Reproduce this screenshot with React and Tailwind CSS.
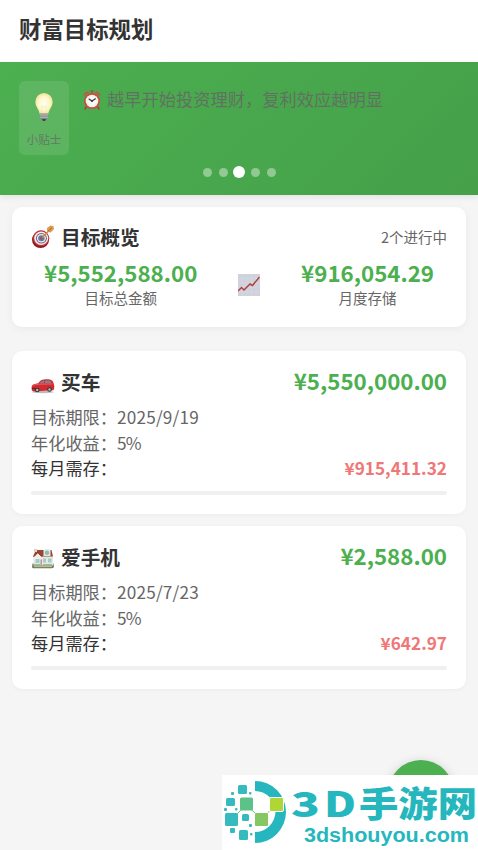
import clsx from 'clsx'

const tips = [0, 1, 2, 3, 4]

const goals = [
  { name: '买车', icon: CarIcon, amount: '¥5,550,000.00', deadline: '2025/9/19', rate: '5%', monthly: '¥915,411.32' },
  { name: '爱手机', icon: HouseIcon, amount: '¥2,588.00', deadline: '2025/7/23', rate: '5%', monthly: '¥642.97' },
]

function BulbIcon({ className }) {
  return (
    <svg viewBox="0 0 20 30" className={className}>
      <defs>
        <radialGradient id="bulb" cx="0.5" cy="0.5" r="0.55">
          <stop offset="0" stopColor="#fffff4" />
          <stop offset="0.6" stopColor="#fdf8c9" />
          <stop offset="1" stopColor="#eed98a" />
        </radialGradient>
      </defs>
      <path d="M10 1a8.7 8.7 0 0 1 8.7 8.7c0 5-3.7 7.2-4.4 12.3H5.7C5 16.9 1.3 14.7 1.3 9.7A8.7 8.7 0 0 1 10 1z" fill="url(#bulb)" />
      <path d="M8.500 21l-1-7 2.500 1 2.500-1-1 7" fill="none" stroke="#f3e6ae" strokeWidth="0.6" />
      <path d="M6 21.5h8V26l-2 2.600H8L6 26z" fill="#7f8a86" />
      <path d="M6 23h8M6 25.200h8" stroke="#cdd3cf" strokeWidth="0.8" />
      <path d="M8 27h4l-1 2H9z" fill="#3d4944" />
    </svg>
  )
}

function ClockIcon({ className }) {
  return (
    <svg viewBox="0 0 20 20" className={className}>
      <path d="M4.500 16.500L3 19M15.500 16.500L17 19" stroke="#a6463a" strokeWidth="1.600" strokeLinecap="round" />
      <path d="M1.500 6.200A4.300 4.300 0 0 1 7.500 2zM18.500 6.200A4.300 4.300 0 0 0 12.500 2z" fill="#c75446" />
      <path d="M10 3V1M8.500 1h3" stroke="#a6463a" strokeWidth="1.200" />
      <circle cx="10" cy="11" r="8" fill="#c94b3e" />
      <circle cx="10" cy="11" r="6.300" fill="#f8f7f3" />
      <circle cx="10" cy="11" r="5.300" fill="none" stroke="#b9bcb8" strokeWidth="0.7" strokeDasharray="0.7 2.070" />
      <path d="M7 9l3 2 3.400-2.200" fill="none" stroke="#303030" strokeWidth="1.100" strokeLinecap="round" />
      <circle cx="10" cy="11" r="0.9" fill="#303030" />
    </svg>
  )
}

function TargetIcon({ className }) {
  return (
    <svg viewBox="0 0 24 24" className={className}>
      <ellipse cx="9.500" cy="14.800" rx="8.500" ry="8.300" fill="#8e1620" />
      <ellipse cx="10" cy="13.300" rx="8.300" ry="8" fill="#b8323a" />
      <ellipse cx="10.200" cy="13.200" rx="7" ry="6.700" fill="#f4eeee" />
      <ellipse cx="10.400" cy="13.200" rx="5.500" ry="5.200" fill="#8d5968" />
      <ellipse cx="10.400" cy="13.200" rx="4.500" ry="4.200" fill="#e8edf4" />
      <ellipse cx="10.400" cy="13.200" rx="3.200" ry="3" fill="#547fae" />
      <circle cx="10.400" cy="13.200" r="1.300" fill="#c23c40" />
      <path d="M11 13l7-7.500" stroke="#c9873d" strokeWidth="1.300" />
      <path d="M16 3l3.500-2.500 3 .7L23 4l-3.300 3.400-3.600-.6z" fill="#dd9a50" />
      <path d="M17 6.300l4-3.500" stroke="#a2622c" strokeWidth="0.9" />
    </svg>
  )
}

function ChartIcon({ className }) {
  return (
    <svg viewBox="0 0 22 22" className={className}>
      <rect width="22" height="22" fill="#cfd2dc" />
      <path d="M4.500 0v22M9 0v22M13.500 0v22M18 0v22M0 4.500h22M0 9h22M0 13.500h22M0 18h22" stroke="#d8dbe3" strokeWidth="0.5" />
      <path d="M0 17l3.500-3.500 2.500 2.500 6-6 2.500 1.500L21.500 3" fill="none" stroke="#b73e40" strokeWidth="1.500" />
    </svg>
  )
}

function CarIcon({ className }) {
  return (
    <svg viewBox="0 0 24 24" className={className}>
      <ellipse cx="12" cy="20" rx="11" ry="1.200" fill="#bcbcbc" />
      <path d="M.7 14.500c.3-2 2.700-2.800 6.600-3.300 1.500-2.400 3-3.700 6-3.800 4-.2 6.300.2 7.700 1.200 1 .8 1.800 3 2.200 4.900.2 2.200 0 4-1 4.700L2.500 19.600C.9 19.300.3 17.500.7 14.500z" fill="#cf2a30" />
      <path d="M8.500 11.300c1.300-1.900 2.500-2.800 4.600-2.900v2.900zM14 8.400l4.800.2c.8.600 1.200 1.400 1.500 2.500l-6.300.2z" fill="#7c858d" />
      <path d="M1.500 13.500c2-1 5-1.200 9-1.300l11-.3" fill="none" stroke="#ef686a" strokeWidth="0.9" />
      <path d="M1 16.500h4" stroke="#732027" strokeWidth="1.200" />
      <circle cx="6.200" cy="18" r="2.300" fill="#3a3335" />
      <circle cx="6.200" cy="18" r="1.200" fill="#babdc0" />
      <circle cx="18.500" cy="17.500" r="2.300" fill="#3a3335" />
      <circle cx="18.500" cy="17.500" r="1.200" fill="#babdc0" />
    </svg>
  )
}

function HouseIcon({ className }) {
  return (
    <svg viewBox="0 0 24 24" className={className}>
      <path d="M1.500 16.500h21l.5 3.700-2 1H2l-1-1z" fill="#66795a" />
      <path d="M3 19.600h18" stroke="#c8b48b" strokeWidth="1.200" />
      <path d="M2.500 9h19.500v9.500H2.500z" fill="#e9e8df" />
      <path d="M5 3h15.500L22 9.500H2L4 5z" fill="#9c4534" />
      <path d="M3 2h3v3H3z" fill="#ddd2c4" />
      <path d="M3.300 13V9.500L6.800 6l3.500 3.500V13z" fill="#f0eee6" />
      <path d="M2.500 9.800l4.300-4.300 4.300 4.300" fill="none" stroke="#7d382f" strokeWidth="1" />
      <path d="M12.500 3.500l1.500-1.500h4l1.500 1.500V9h-7z" fill="#e7e8df" />
      <circle cx="16" cy="5.800" r="2.200" fill="#84c1b8" />
      <path d="M4.500 12h4v4h-4zM12 11.500h3v4h-3zM17 11.500h3.500v4H17z" fill="#9fcdd4" />
      <path d="M9.500 12.500h1.500v6H9.500z" fill="#b99b7d" />
      <path d="M3 17.700h6M12 17.700h9" stroke="#86b394" strokeWidth="1" />
    </svg>
  )
}

function TipBanner() {
  return (
    <section className="relative h-[133px] bg-linear-135 from-[#4caf50] to-[#45a049] px-[19px] pt-[19px] shadow-[0_2px_6px_rgba(0,0,0,0.08)]">
      <div className="flex items-start">
        <div className="flex h-[74px] w-[50px] flex-col items-center rounded-md bg-white/10 pt-[11px]">
          <BulbIcon className="h-[30px] w-5" />
          <span className="mt-[9px] text-[11.7px] leading-4 text-[#666]/75">小贴士</span>
        </div>
        <div className="ml-[13px] flex h-[38px] items-center">
          <ClockIcon className="size-5" />
          <p className="mb-[2px] ml-[5px] whitespace-nowrap text-[17.25px] text-[#666]/85">越早开始投资理财，复利效应越明显</p>
        </div>
      </div>
      <div className="absolute inset-x-0 bottom-[17px] flex h-3 items-center justify-center gap-[7px]">
        {tips.map((i) => (
          <span key={i} className={clsx('rounded-full', i === 2 ? '-mx-[1.5px] size-3 bg-white' : 'size-[9px] bg-white/40')} />
        ))}
      </div>
    </section>
  )
}

function Stat({ value, label }) {
  return (
    <div className="flex flex-col items-center">
      <span className="text-[22.3px] leading-[26px] font-bold text-[#4caf50]">{value}</span>
      <span className="text-[14.5px] leading-[26px] text-[#666]">{label}</span>
    </div>
  )
}

function Overview() {
  return (
    <section className="h-[120px] rounded-[10px] bg-white px-[19px] pt-[17px] shadow-[0_2px_8px_rgba(0,0,0,0.05)]">
      <div className="flex h-[26px] items-center">
        <TargetIcon className="size-6" />
        <h2 className="ml-[6px] text-[19.7px] font-bold text-[#333]">目标概览</h2>
        <span className="ml-auto text-[14.5px] text-[#666]">2个进行中</span>
      </div>
      <div className="mt-[9px] flex items-center justify-between pr-[13px] pl-[13px]">
        <Stat value="¥5,552,588.00" label="目标总金额" />
        <ChartIcon className="size-[22px]" />
        <Stat value="¥916,054.29" label="月度存储" />
      </div>
    </section>
  )
}

function GoalCard({ goal }) {
  const Icon = goal.icon
  return (
    <section className="h-[163px] rounded-[10px] bg-white px-[19px] pt-[18px] shadow-[0_1px_5px_rgba(0,0,0,0.04)]">
      <div className="flex h-[26px] items-center">
        <Icon className="mt-1 size-6" />
        <h3 className="ml-[6px] text-[19.7px] font-bold text-[#333]">{goal.name}</h3>
        <span className="mb-[3px] ml-auto text-[22.3px] font-bold text-[#4caf50]">{goal.amount}</span>
      </div>
      <div className="mt-[9px] text-[17.2px] leading-[25.7px] text-[#666]">
        <p>
          目标期限：<span className="tracking-[0.2px]">{goal.deadline}</span>
        </p>
        <p>
          年化收益：<span className="tracking-[-0.7px]">{goal.rate}</span>
        </p>
        <div className="flex items-center justify-between">
          <span className="text-[#333]">每月需存：</span>
          <span className="font-bold text-[#ef7777]">{goal.monthly}</span>
        </div>
      </div>
      <div className="mt-[10px] h-1 rounded-full bg-[#f0f0f0]" />
    </section>
  )
}

function Watermark() {
  return (
    <div className="absolute right-0 bottom-0 h-[75px] w-[256px] bg-white">
      <svg viewBox="0 0 256 75" className="size-full">
        <path d="M33 6a31 31 0 0 1 0 62V57a20.500 20.500 0 0 0 0-41z" fill="#25b7bd" />
        <path d="M12 42L24 30l16 14L54 29" fill="none" stroke="#6dc48b" strokeWidth="1" />
        <g fill="#35babd">
          <rect x="16" y="10" width="9" height="9" rx="1.500" />
          <rect x="9" y="17" width="3" height="3" rx="1" />
          <rect x="27" y="17" width="2.500" height="2.500" rx="1" />
          <rect x="4" y="23" width="9" height="8" rx="1.500" />
          <rect x="2" y="33" width="3" height="3" rx="1" />
          <rect x="13" y="33" width="2.500" height="2.500" rx="1" />
          <rect x="3" y="38" width="13" height="13" rx="1.500" />
          <rect x="20" y="39" width="7" height="7" rx="1.500" />
          <rect x="8" y="53" width="5" height="5" rx="1" />
          <rect x="17" y="55" width="9" height="10" rx="1.500" />
          <rect x="27" y="49" width="3" height="3" rx="1" />
          <rect x="28" y="58" width="2.500" height="2.500" rx="1" />
        </g>
        <rect x="18" y="22.500" width="13" height="13" rx="1.500" fill="#5dc288" />
        <rect x="32.500" y="37.500" width="14" height="14" rx="1.500" fill="#84c763" stroke="#fff" strokeWidth="1" />
        <rect x="47.500" y="22.500" width="14" height="14" rx="1.500" fill="#add636" stroke="#fff" strokeWidth="1" />
        <g fill="#25b7bd" fontFamily="'Noto Sans CJK SC', sans-serif" fontWeight="900" fontSize="35">
          <text x="69" y="42" textLength="29" lengthAdjust="spacingAndGlyphs">3</text>
          <text x="102" y="42" textLength="32" lengthAdjust="spacingAndGlyphs">D</text>
          <text x="137" y="42" textLength="118" lengthAdjust="spacingAndGlyphs">手游网</text>
        </g>
        <text x="82" y="67" textLength="165" lengthAdjust="spacingAndGlyphs" fill="#25b7bd" fontFamily="'Liberation Sans', sans-serif" fontWeight="700" fontSize="20">
          3dshouyou.com
        </text>
      </svg>
    </div>
  )
}

export default function App() {
  return (
    <div className="relative h-[850px] w-[478px] overflow-hidden bg-[#f5f5f5] font-['Noto_Sans_CJK_SC',sans-serif]">
      <header className="flex h-[62px] items-center bg-white px-[19px] pb-[4px]">
        <h1 className="text-[22.4px] font-bold text-[#333]">财富目标规划</h1>
      </header>
      <TipBanner />
      <main className="px-3 pt-3">
        <Overview />
        <div className="mt-6 flex flex-col gap-3">
          {goals.map((goal) => (
            <GoalCard key={goal.name} goal={goal} />
          ))}
        </div>
      </main>

      {/* Floating add button */}
      <button className="absolute top-[760px] left-[388px] size-[66px] rounded-full bg-[#4caf50] shadow-[0_3px_12px_rgba(0,0,0,0.2)]" />
      <Watermark />
    </div>
  )
}
